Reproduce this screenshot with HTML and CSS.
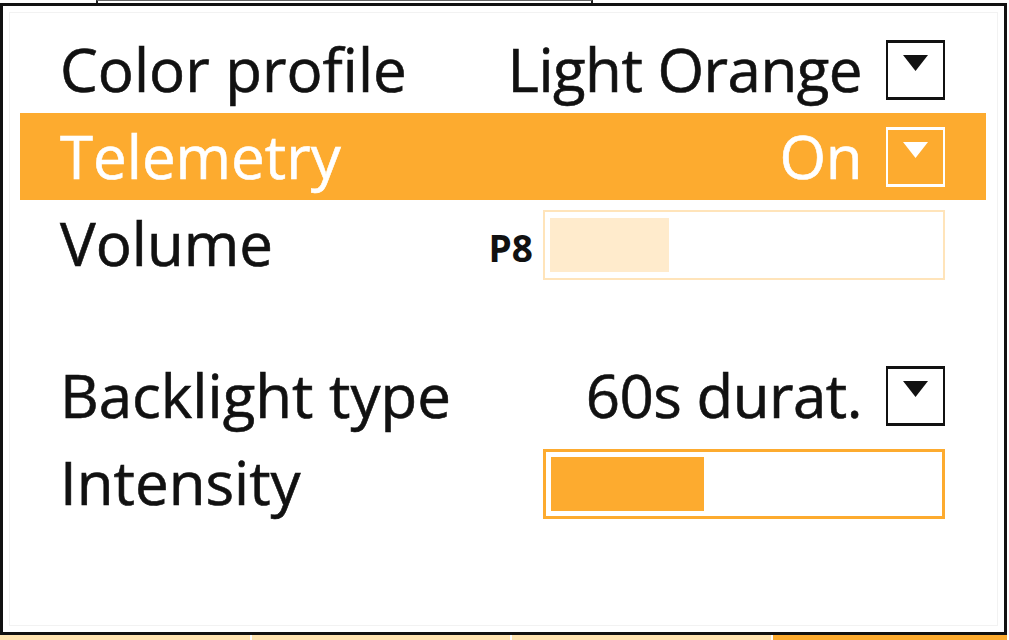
FILE: index.html
```html
<!DOCTYPE html>
<html>
<head>
<meta charset="utf-8">
<link rel="stylesheet" href="styles.css">
</head>
<body>
<div class="top-edge"><div class="tab-above"></div></div>
<div class="panel">
  <div class="inner">
    <div class="row">
      <span class="label">Color profile</span>
      <span class="value">Light Orange</span>
      <span class="dd"><svg width="25" height="16" viewBox="0 0 25 16"><polygon points="0,0 25,0 12.5,16" fill="currentColor"/></svg></span>
    </div>
    <div class="row active">
      <span class="label">Telemetry</span>
      <span class="value">On</span>
      <span class="dd"><svg width="25" height="16" viewBox="0 0 25 16"><polygon points="0,0 25,0 12.5,16" fill="currentColor"/></svg></span>
    </div>
    <div class="row">
      <span class="label">Volume</span>
      <span class="tag">P8</span>
      <div class="slider slider-light"><div class="fill" style="width:119px"></div></div>
    </div>
    <div class="spacer"></div>
    <div class="row">
      <span class="label">Backlight type</span>
      <span class="value">60s durat.</span>
      <span class="dd"><svg width="25" height="16" viewBox="0 0 25 16"><polygon points="0,0 25,0 12.5,16" fill="currentColor"/></svg></span>
    </div>
    <div class="row">
      <span class="label">Intensity</span>
      <div class="slider slider-strong"><div class="fill" style="width:153px"></div></div>
    </div>
  </div>
</div>
<div class="tabs">
  <span class="tab tab-light t1"></span>
  <span class="tab tab-light t2"></span>
  <span class="tab tab-light t3"></span>
  <span class="tab tab-orange t4"></span>
</div>
</body>
</html>
```

FILE: styles.css
```css
html, body {
  margin: 0;
  padding: 0;
  background: #ffffff;
}
body {
  width: 1009px;
  height: 640px;
  overflow: hidden;
  font-family: "Open Sans", "Noto Sans", sans-serif;
  color: #111111;
}
.top-edge {
  height: 3px;
  position: relative;
}
.tab-above {
  margin-left: 96px;
  width: 497px;
  height: 3px;
  box-sizing: border-box;
  border-top: 1px solid #666;
  border-left: 2px solid #222;
  border-right: 2px solid #222;
}
.panel {
  width: 1007px;
  height: 632px;
  box-sizing: border-box;
  border: 3px solid #111;
  background: #fff;
}
.inner {
  margin: 6px;
  height: calc(100% - 12px);
  box-sizing: border-box;
  border: 1px solid #f2f2f2;
  padding: 13px 11px 0 10px;
}
.row {
  height: 87px;
  display: flex;
  align-items: center;
  padding: 0 41px 0 40px;
  font-size: 60px;
  line-height: 89px;
  -webkit-text-stroke: 0.6px currentColor;
  white-space: nowrap;
}
.row.active {
  background: #fdab2f;
  color: #ffffff;
}
.label {
  flex: 1;
}
.value {
  margin-right: 24px;
  letter-spacing: -0.5px;
}
.dd {
  width: 59px;
  height: 60px;
  box-sizing: border-box;
  border: 3px solid #111111;
  border-left-width: 2px;
  border-right-width: 2px;
  display: flex;
  justify-content: center;
  align-items: flex-start;
  padding-top: 12px;
  color: #111111;
  -webkit-text-stroke: 0;
}
.active .dd {
  border-color: #ffffff;
  color: #ffffff;
}
.dd svg {
  display: block;
}
.tag {
  font-size: 37px;
  font-weight: 700;
  line-height: 1;
  margin-right: 10px;
  margin-top: 8px;
  -webkit-text-stroke: 0;
}
.slider {
  width: 402px;
  height: 70px;
  box-sizing: border-box;
  display: flex;
  margin-top: 3px;
}
.slider-light {
  border: 2px solid #ffe4ba;
  padding: 6px 5px;
}
.slider-light .fill {
  background: #ffebcc;
}
.slider-strong {
  border: 3px solid #fdab2f;
  padding: 5px;
}
.slider-strong .fill {
  background: #fdab2f;
}
.fill {
  height: 100%;
}
.spacer {
  height: 65px;
}
.tabs {
  display: flex;
  gap: 2px;
  height: 5px;
  width: 1007px;
}
.tab {
  display: block;
  height: 100%;
}
.tab-light { background: #ffe3b0; }
.tab-orange { background: #fdab2f; }
.t1 { width: 250px; }
.t2 { width: 258px; }
.t3 { width: 259px; }
.t4 { flex: 1; }
```
